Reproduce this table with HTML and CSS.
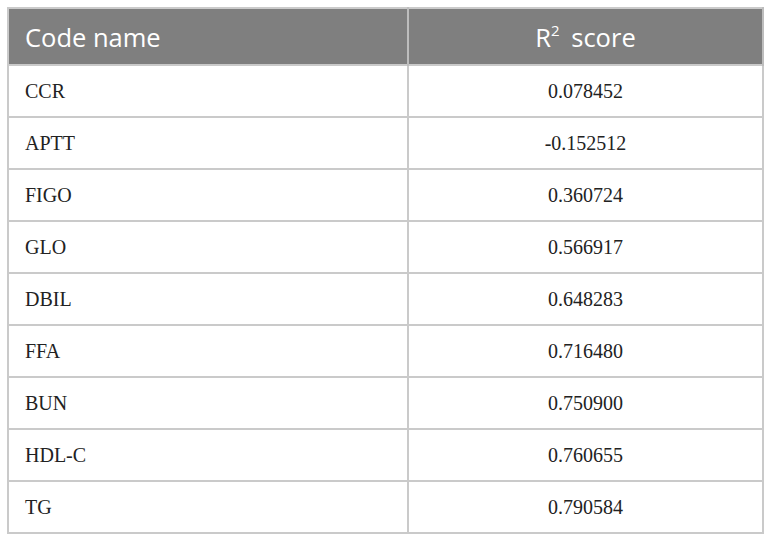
FILE: index.html
```html
<!DOCTYPE html>
<html>
<head>
<meta charset="utf-8">
<link rel="stylesheet" href="styles.css">
</head>
<body>
<table class="data">
  <thead>
    <tr><th class="name">Code name</th><th class="val">R<sup>2</sup> score</th></tr>
  </thead>
  <tbody>
    <tr><td class="name">CCR</td><td class="val">0.078452</td></tr>
    <tr><td class="name">APTT</td><td class="val">-0.152512</td></tr>
    <tr><td class="name">FIGO</td><td class="val">0.360724</td></tr>
    <tr><td class="name">GLO</td><td class="val">0.566917</td></tr>
    <tr><td class="name">DBIL</td><td class="val">0.648283</td></tr>
    <tr><td class="name">FFA</td><td class="val">0.716480</td></tr>
    <tr><td class="name">BUN</td><td class="val">0.750900</td></tr>
    <tr><td class="name">HDL-C</td><td class="val">0.760655</td></tr>
    <tr><td class="name">TG</td><td class="val">0.790584</td></tr>
  </tbody>
</table>
</body>
</html>
```
FILE: styles.css
```css
html, body { margin: 0; padding: 0; background: #fff; }
body { padding: 7px 8px 0 7px; }
.data {
  border-collapse: collapse;
  width: 757px;
  table-layout: fixed;
  border: 2px solid #cacaca;
}
.data th {
  background: #7f7f7f;
  color: #fff;
  font-family: "Open Sans", sans-serif;
  font-weight: 400;
  font-size: 25.5px;
  height: 55px;
  padding: 0 16px;
  border-right: 2px solid #bdbdbd;
  vertical-align: middle;
}
.data th.name { text-align: left; width: 366px; }
.data th.val { text-align: center; }
.data sup { font-size: 15px; vertical-align: 11px; line-height: 0; margin-right: 5px; }
.data td {
  font-family: "Liberation Serif", serif;
  font-size: 20px;
  color: #222;
  height: 50px;
  padding: 0 16px;
  border: 2px solid #cacaca;
  vertical-align: middle;
}
.data td.name { text-align: left; }
.data td.val { text-align: center; }
```
